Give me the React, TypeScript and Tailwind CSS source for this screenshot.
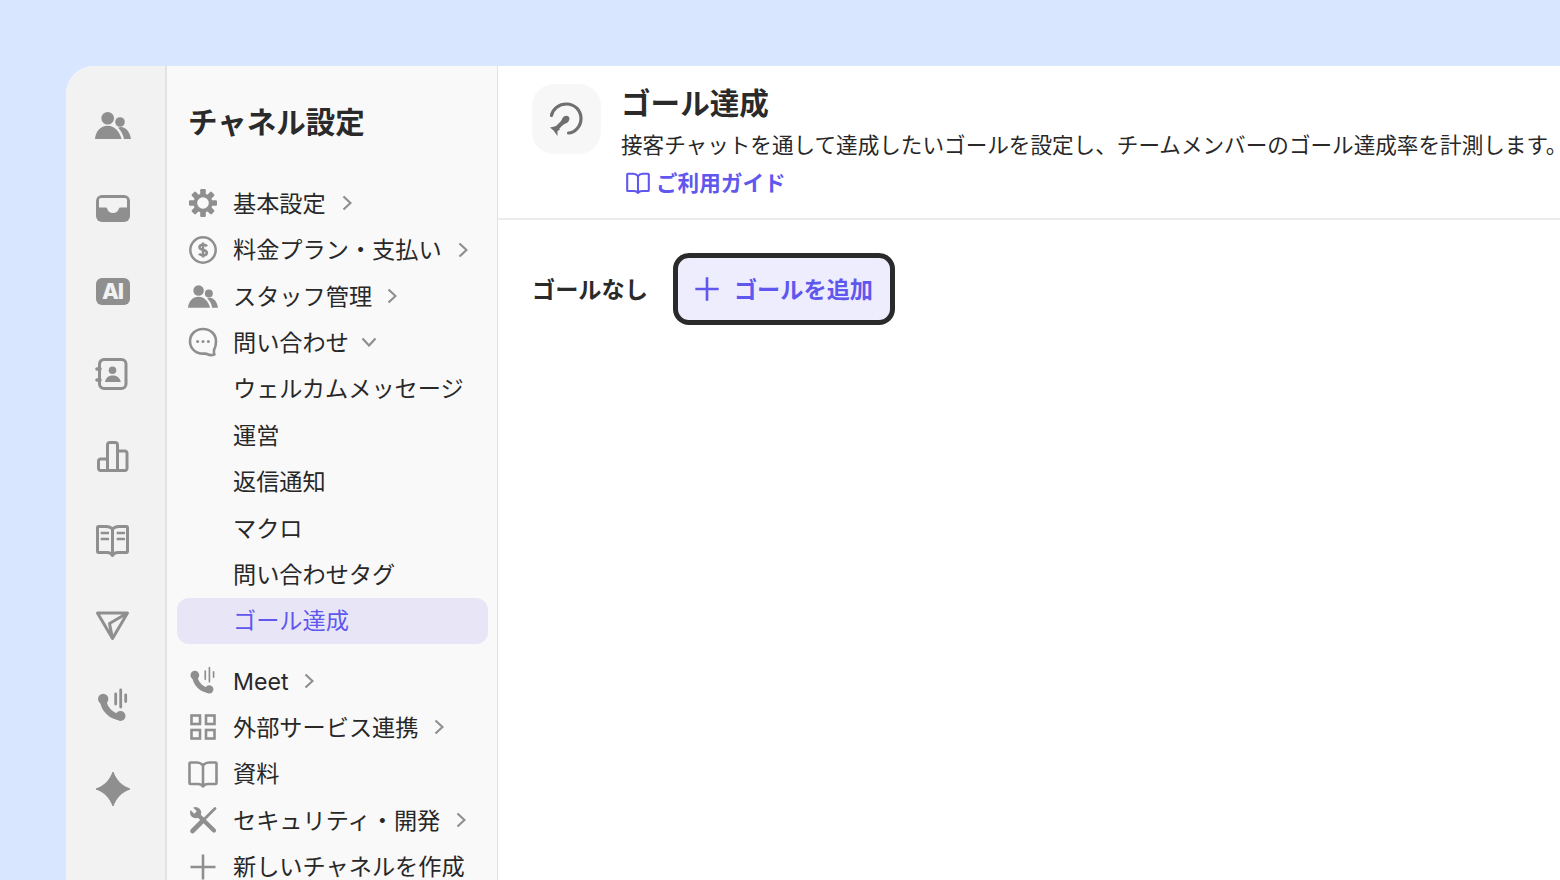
import React from "react";

const GRAY = "#8f8f8f";

const Svg = ({ size = 36, vb = 36, children }: { size?: number; vb?: number; children: React.ReactNode }) => (
  <svg width={size} height={size} viewBox={`0 0 ${vb} ${vb}`} fill="none" className="block shrink-0">
    {children}
  </svg>
);

const UsersIcon = ({ size = 36 }: { size?: number }) => (
  <Svg size={size}>
    <circle cx="12.7" cy="11.3" r="6.3" fill={GRAY} />
    <circle cx="25" cy="15" r="4.8" fill={GRAY} />
    <path d="M0 32C0.5 24.5 5.5 18.8 12.7 18.8C19.5 18.8 24.5 24.5 26.5 32Z" fill={GRAY} />
    <path d="M23 20.8C24 20.2 25 20 26 20C31 20 35 25 36 32H29C28.2 27.5 26 23.5 23 20.8Z" fill={GRAY} />
  </Svg>
);

const InboxIcon = () => (
  <Svg>
    <rect x="1" y="5" width="34" height="27" rx="6" fill={GRAY} />
    <path
      d="M4 10C4 8.9 4.9 8 6 8H30C31.1 8 32 8.9 32 10V17.5H25.5C24.5 17.5 24 18.2 23.6 19.2C22.9 21.4 21 23 18 23C15 23 13.1 21.4 12.4 19.2C12 18.2 11.5 17.5 10.5 17.5H4Z"
      fill="#f2f2f2"
    />
  </Svg>
);

const AiIcon = () => (
  <div className="flex h-[27px] w-[34px] items-center justify-center rounded-[6px] bg-[#8f8f8f] text-[22px] leading-none font-extrabold tracking-[-1px] text-[#f2f2f2]">
    AI
  </div>
);

const ContactIcon = () => (
  <Svg>
    <rect x="4.5" y="3.5" width="26.5" height="29" rx="4.5" stroke={GRAY} strokeWidth="3" />
    <path d="M2 13H5M2 24H5" stroke={GRAY} strokeWidth="3.6" strokeLinecap="round" />
    <circle cx="17.5" cy="14.2" r="3.8" fill={GRAY} />
    <path d="M10 26C10.4 22 13.5 19.4 17.8 19.4C22 19.4 25.2 22 25.8 26Z" fill={GRAY} />
  </Svg>
);

const ChartIcon = () => (
  <Svg>
    <path
      d="M12.5 31.5V6C12.5 4.5 13.5 3.5 15 3.5H20C21.5 3.5 22.5 4.5 22.5 6V31.5M12.5 31.5H5.5C4.5 31.5 3.5 30.5 3.5 29.5V22C3.5 21 4.5 20 5.5 20H12.5M22.5 31.5H30C31 31.5 32 30.5 32 29.5V14C32 13 31 12 30 12H22.5M12.5 31.5H22.5"
      stroke={GRAY}
      strokeWidth="3"
      strokeLinejoin="round"
    />
  </Svg>
);

const GuideBookIcon = () => (
  <Svg>
    <path
      d="M17.5 7C15.5 5 13 4.5 11 4.5H3.5C2.5 4.5 2.5 5 2.5 6V29C2.5 30 3 30.5 3.5 30.5H12C14 30.5 16.5 31.5 17.5 33.5C18.5 31.5 21 30.5 23 30.5H31.5C32 30.5 32.5 30 32.5 29V6C32.5 5 32.5 4.5 31.5 4.5H24C22 4.5 19.5 5 17.5 7ZM17.5 7V33"
      stroke={GRAY}
      strokeWidth="3"
      strokeLinejoin="round"
    />
    <path d="M5.7 11H14M5.7 17H14M21.7 11H30M21.7 17H30" stroke={GRAY} strokeWidth="2.6" />
  </Svg>
);

const SendIcon = () => (
  <Svg>
    <path d="M2.5 8H32.5L17.5 33.5ZM32.5 8L14.5 18.5L17.5 33.5" stroke={GRAY} strokeWidth="3" strokeLinejoin="round" />
  </Svg>
);

const CallIcon = ({ size = 36, thin = false }: { size?: number; thin?: boolean }) => (
  <Svg size={size}>
    <path d="M8.2 11.5C8.6 21 16.5 29 25.5 29" stroke={GRAY} strokeWidth="6.4" />
    <circle cx="8.2" cy="11" r="5.2" fill={GRAY} />
    <circle cx="25.5" cy="28" r="5" fill={GRAY} />
    <path
      d="M25.7 2V19M20.7 6V16M30.7 7V13.5"
      stroke={GRAY}
      strokeWidth={thin ? 2 : 2.8}
      strokeLinecap="round"
    />
  </Svg>
);

const SparkIcon = () => (
  <Svg>
    <path
      d="M18 1C21 9 26.5 15 35 18C26.5 21 21 27 18 35C15 27 9.5 21 1 18C9.5 15 15 9 18 1Z"
      fill={GRAY}
      stroke={GRAY}
      strokeWidth="1"
      strokeLinejoin="round"
    />
  </Svg>
);

const GearIcon = () => (
  <Svg size={30} vb={30}>
    {[0, 45, 90, 135].map((a) => (
      <rect key={a} x="12.2" y="1" width="5.6" height="28" rx="1.2" fill={GRAY} transform={`rotate(${a} 15 15)`} />
    ))}
    <circle cx="15" cy="15" r="9.6" fill={GRAY} />
    <circle cx="15" cy="15" r="5.8" fill="#f9f9f9" />
  </Svg>
);

const DollarIcon = () => (
  <Svg size={30} vb={30}>
    <circle cx="15" cy="15" r="12.7" stroke={GRAY} strokeWidth="2.5" />
    <path
      d="M18.8 11.4C18.2 10.2 16.8 9.8 15 9.8C12.9 9.8 11.5 10.8 11.5 12.3C11.5 16.2 18.9 13.8 18.9 17.8C18.9 19.4 17.2 20.3 15 20.3C13.2 20.3 11.8 19.7 11.1 18.6M15 7.4V22.6"
      stroke={GRAY}
      strokeWidth="2.5"
    />
  </Svg>
);

const ChatIcon = () => (
  <Svg size={30} vb={30}>
    <path
      d="M15 2C7.5 2 2 7.3 2 14.3C2 21.3 7.5 26.6 15 26.6C17 26.6 18.5 26.3 20 27.5C21.5 28.2 25.5 28.4 26.5 27.6C25.8 26.6 25.8 24.8 26 23C27.4 20.6 28 17.8 28 14.3C28 7.3 22.5 2 15 2Z"
      stroke={GRAY}
      strokeWidth="2.6"
      strokeLinejoin="round"
    />
    <circle cx="9.6" cy="14.5" r="1.5" fill={GRAY} />
    <circle cx="15" cy="14.5" r="1.5" fill={GRAY} />
    <circle cx="20.4" cy="14.5" r="1.5" fill={GRAY} />
  </Svg>
);

const GridIcon = () => (
  <Svg size={30} vb={30}>
    {[
      [3.5, 3.5],
      [18, 3.5],
      [3.5, 18],
      [18, 18],
    ].map(([x, y]) => (
      <rect key={`${x}-${y}`} x={x} y={y} width="8.5" height="8.5" stroke={GRAY} strokeWidth="2.6" />
    ))}
  </Svg>
);

const BookIcon = ({ color = GRAY, size = 30 }: { color?: string; size?: number }) => (
  <Svg size={size} vb={30}>
    <path
      d="M15 6.5C13.5 4.5 11.5 3.5 9 3.5H2.5C2 3.5 1.5 4 1.5 4.5V24C1.5 24.8 2 25 2.5 25H10C12 25 14 26 15 27.5C16 26 18 25 20 25H27.5C28 25 28.5 24.8 28.5 24V4.5C28.5 4 28 3.5 27.5 3.5H21C18.5 3.5 16.5 4.5 15 6.5ZM15 6.5V27"
      stroke={color}
      strokeWidth="2.6"
      strokeLinejoin="round"
    />
  </Svg>
);

const ToolsIcon = () => (
  <Svg size={30} vb={30}>
    <path d="M8 8L26 25.5" stroke={GRAY} strokeWidth="4.2" strokeLinecap="round" />
    <circle cx="7.6" cy="7.6" r="5.6" fill={GRAY} />
    <path d="M1.5 1.5L7.5 7.5" stroke="#f9f9f9" strokeWidth="3.6" />
    <path d="M27 3.5L15 15.5" stroke={GRAY} strokeWidth="2.8" strokeLinecap="round" />
    <path d="M15.5 15L4.5 26" stroke={GRAY} strokeWidth="4.6" strokeLinecap="round" />
  </Svg>
);

const PlusIcon = ({ color = GRAY, size = 30, width = 2.6 }: { color?: string; size?: number; width?: number }) => (
  <Svg size={size} vb={30}>
    <path d="M15 2.5V27.5M2.5 15H27.5" stroke={color} strokeWidth={width} />
  </Svg>
);

const GoalIcon = () => (
  <svg width="36" height="36" viewBox="0 0 36 36" fill="none" className="block">
    <path
      d="M2.5 14.5C3.8 7.6 10 3 17.5 3C25.6 3 32 9.4 32 17.5C32 25.6 25.6 32 19.5 32"
      stroke="#6f6f6f"
      strokeWidth="3.2"
      strokeLinecap="round"
    />
    <path d="M7 28L15 20" stroke="#6f6f6f" strokeWidth="4" />
    <path d="M13.5 17C15.2 14.6 18 14 19.6 15.6C21.2 17.2 20.6 20 18.2 21.8L13.5 24L11.5 22Z" fill="#6f6f6f" />
    <path d="M1 26.5L7.5 25L11 28.5L8.5 30L8.5 35L4.5 29.5Z" fill="#6f6f6f" />
  </svg>
);

const ChevronRight = () => (
  <svg width="10" height="16" viewBox="0 0 10 16" fill="none" className="block shrink-0">
    <path d="M1.5 1.5L8.5 8L1.5 14.5" stroke={GRAY} strokeWidth="2.2" />
  </svg>
);

const ChevronDown = () => (
  <svg width="16" height="10" viewBox="0 0 16 10" fill="none" className="block shrink-0">
    <path d="M1.5 1.5L8 8.5L14.5 1.5" stroke={GRAY} strokeWidth="2.2" />
  </svg>
);

const railIcons = [
  <UsersIcon key="users" />,
  <InboxIcon key="inbox" />,
  <AiIcon key="ai" />,
  <ContactIcon key="contact" />,
  <ChartIcon key="chart" />,
  <GuideBookIcon key="guide" />,
  <SendIcon key="send" />,
  <CallIcon key="call" />,
  <SparkIcon key="spark" />,
];

const Row = ({
  icon,
  label,
  arrow,
  gap = "ml-[14px]",
}: {
  icon?: React.ReactNode;
  label: string;
  arrow?: "right" | "down";
  gap?: string;
}) => (
  <div className="mx-[10px] flex h-[46.4px] items-center pl-[11px]">
    <div className="mr-[15px] flex w-[30px] shrink-0 justify-center">{icon}</div>
    <span className="pt-[2px] text-[23.2px] whitespace-nowrap text-[#282828]">{label}</span>
    {arrow === "right" && (
      <span className={gap}>
        <ChevronRight />
      </span>
    )}
    {arrow === "down" && (
      <span className={gap}>
        <ChevronDown />
      </span>
    )}
  </div>
);

export default function App() {
  return (
    <div
      className="h-[880px] w-[1560px] overflow-hidden bg-[#d9e6ff] pt-[66px] pl-[66px]"
      style={{ fontFamily: "Inter, 'Noto Sans CJK JP', sans-serif" }}
    >
      <div className="flex h-[814px] overflow-hidden rounded-tl-[28px] bg-white">
        <div className="flex w-[101px] shrink-0 flex-col items-center border-r-2 border-[#e3e3e3] bg-[#f2f2f2] pt-[17.5px]">
          {railIcons.map((icon) => (
            <div key={icon.key} className="flex h-[83px] w-full items-center justify-center pr-[6px]">
              {icon}
            </div>
          ))}
        </div>

        <div className="w-[331px] shrink-0 border-r border-[#e3e3e3] bg-[#f9f9f9] pt-[36px]">
          <div className="mb-[38px] pl-[21px] text-[29.5px] leading-[40px] font-bold whitespace-nowrap text-[#2a2a2a]">
            チャネル設定
          </div>
          <Row icon={<GearIcon />} label="基本設定" arrow="right" gap="ml-[16px]" />
          <Row icon={<DollarIcon />} label="料金プラン・支払い" arrow="right" gap="ml-[16px]" />
          <Row icon={<UsersIcon size={30} />} label="スタッフ管理" arrow="right" gap="ml-[15px]" />
          <Row icon={<ChatIcon />} label="問い合わせ" arrow="down" gap="ml-[12px]" />
          <Row label="ウェルカムメッセージ" />
          <Row label="運営" />
          <Row label="返信通知" />
          <Row label="マクロ" />
          <Row label="問い合わせタグ" />
          <div className="mr-[9px] ml-[10px] flex h-[46.4px] items-center rounded-[12px] bg-[#e8e6f6] pl-[56px]">
            <span className="pt-[2px] text-[23.2px] whitespace-nowrap text-[#5f57ee]">ゴール達成</span>
          </div>
          <div className="h-[14px]" />
          <Row icon={<CallIcon size={30} thin />} label="Meet" arrow="right" gap="ml-[15px]" />
          <Row icon={<GridIcon />} label="外部サービス連携" arrow="right" gap="ml-[15px]" />
          <Row icon={<BookIcon />} label="資料" />
          <Row icon={<ToolsIcon />} label="セキュリティ・開発" arrow="right" gap="ml-[16px]" />
          <Row icon={<PlusIcon />} label="新しいチャネルを作成" />
        </div>

        <div className="min-w-0 flex-1">
          <div className="flex h-[154px] items-start gap-[20px] border-b-2 border-[#ececec] pt-[18px] pl-[34px]">
            <div className="flex h-[70px] w-[69px] shrink-0 items-center justify-center rounded-[22px] bg-[#f7f7f7]">
              <GoalIcon />
            </div>
            <div className="min-w-0">
              <div className="-mt-[1px] text-[29.6px] leading-[40px] font-bold whitespace-nowrap text-[#2a2a2a]">ゴール達成</div>
              <div className="mt-[2px] text-[21.6px] leading-[40px] whitespace-nowrap text-[#282828]">
                接客チャットを通して達成したいゴールを設定し、チームメンバーのゴール達成率を計測します。
              </div>
              <div className="flex h-[36px] items-center gap-[6px] pl-[5px] text-[21.6px] font-bold whitespace-nowrap text-[#5f57ee]">
                <BookIcon color="#5f57ee" size={24} />
                ご利用ガイド
              </div>
            </div>
          </div>
          <div className="flex items-center pt-[33px] pl-[34px]">
            <span className="mr-[25px] pt-[2px] text-[23.2px] font-bold whitespace-nowrap text-[#2a2a2a]">ゴールなし</span>
            <div className="flex h-[72px] w-[222px] items-center rounded-[16px] border-[5px] border-[#2a2a2a] bg-[#eeedfd] pl-[15px]">
              <PlusIcon color="#5f57ee" size={28} width={2.8} />
              <span className="ml-[13px] pt-[2px] text-[23.2px] font-bold whitespace-nowrap text-[#5f57ee]">ゴールを追加</span>
            </div>
          </div>
        </div>
      </div>
    </div>
  );
}
